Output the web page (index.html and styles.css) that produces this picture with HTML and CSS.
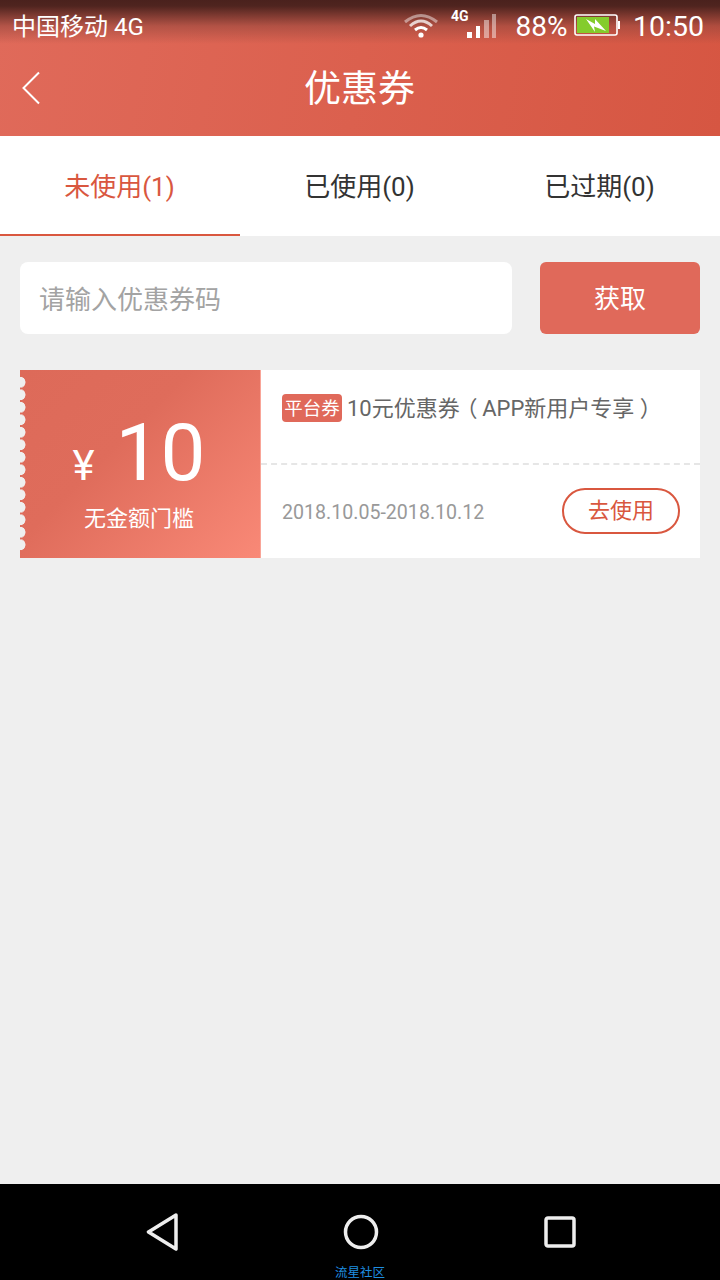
FILE: index.html

```html
<!DOCTYPE html>
<html>
<head>
    <meta charset="utf-8">
    <title>优惠券</title>
    <link rel="stylesheet" href="styles.css">
</head>
<body>
<div class="page">
    <div class="header">
        <div class="status">
            <span class="carrier">中国移动 4G</span>
            <svg class="wifi" width="36" height="26" viewBox="0 0 36 26">
                <path d="M2 10 Q18 -3 34 10" fill="none" stroke="#fff" stroke-opacity=".45" stroke-width="3"/>
                <path d="M7 14 Q18 4 29 14" fill="none" stroke="#fff" stroke-opacity=".75" stroke-width="3"/>
                <path d="M12 18 Q18 13 24 18" fill="none" stroke="#fff" stroke-width="3"/>
                <circle cx="18" cy="23" r="2.600" fill="#fff"/>
            </svg>
            <div class="signal">
                <span class="net">4G</span>
                <svg width="30" height="26" viewBox="0 0 30 26">
                    <rect x="0" y="20" width="5" height="6" fill="#fff"/>
                    <rect x="9" y="14" width="4" height="12" fill="#fff"/>
                    <rect x="17" y="8" width="5" height="18" fill="#fff" fill-opacity=".45"/>
                    <rect x="25" y="2" width="4" height="24" fill="#fff" fill-opacity=".45"/>
                </svg>
            </div>
            <span class="percent">88%</span>
            <svg class="battery" width="46" height="22" viewBox="0 0 46 22">
                <rect x="1" y="1" width="42" height="20" rx="2" fill="none" stroke="#fff" stroke-width="1.600"/>
                <rect x="3" y="3" width="32" height="16" fill="#84cc2c"/>
                <rect x="44" y="7" width="2" height="8" fill="#fff"/>
                <path d="M12 5 L21 10 L21 5 L32 17 L20 12.500 L21 18 Z" fill="#fff"/>
            </svg>
            <span class="time">10:50</span>
        </div>
        <div class="title-bar">
            <svg class="back" width="20" height="34" viewBox="0 0 20 34">
                <path d="M18 1.500 L2.500 17 L18 32.500" fill="none" stroke="#fff" stroke-width="2"/>
            </svg>
            <h1 class="title">优惠券</h1>
        </div>
    </div>

    <div class="tabs">
        <div class="tab active">未使用(1)</div>
        <div class="tab">已使用(0)</div>
        <div class="tab">已过期(0)</div>
    </div>

    <div class="main">
        <div class="code-row">
            <div class="code-input">请输入优惠券码</div>
            <div class="code-btn">获取</div>
        </div>

        <div class="coupon">
            <div class="coupon-left">
                <div class="amount"><span class="yen">¥</span><span class="num">10</span></div>
                <div class="limit">无金额门槛</div>
            </div>
            <div class="coupon-right">
                <div class="coupon-top">
                    <span class="tag">平台券</span>
                    <span class="coupon-name">10元优惠券<span class="paren">（</span> APP新用户专享 ）</span>
                </div>
                <div class="coupon-bottom">
                    <span class="date">2018.10.05-2018.10.12</span>
                    <span class="use-btn">去使用</span>
                </div>
            </div>
        </div>
    </div>

    <div class="navbar">
        <div class="nav-icons">
            <svg width="34" height="38" viewBox="0 0 34 38">
                <path d="M32 2 L4.500 19 L32 36 Z" fill="none" stroke="#eee" stroke-width="3.500" stroke-linejoin="round"/>
            </svg>
            <svg width="36" height="36" viewBox="0 0 36 36">
                <circle cx="18" cy="18" r="15.500" fill="none" stroke="#eee" stroke-width="3.500"/>
            </svg>
            <svg width="32" height="32" viewBox="0 0 32 32">
                <rect x="2" y="2" width="28" height="28" rx="2" fill="none" stroke="#eee" stroke-width="3.500"/>
            </svg>
        </div>
        <div class="watermark">流星社区</div>
    </div>
</div>
</body>
</html>
```

FILE: styles.css

```css
*{
    margin: 0px;
    padding: 0px;
    box-sizing: border-box;
}
body{
    background-color: #efefef;
    font-family: Roboto, "Noto Sans CJK SC", sans-serif;
}
.page{
    width: 720px;
    height: 1280px;
    display: flex;
    flex-direction: column;
    overflow: hidden;
}
/*顶部*/
.header{
    height: 136px;
    color: #fff;
    background: linear-gradient(180deg, #4a211d 0px, #4f241f 6px, rgba(150,70,60,0.6) 26px, rgba(224,104,88,0) 44px),
                linear-gradient(100deg, #e06a5a 0%, #d65642 100%);
}
.status{
    height: 50px;
    padding: 3px 16px 0px 12px;
    display: flex;
    align-items: center;
}
.carrier{
    font-size: 24px;
    margin-right: auto;
    margin-top: -4px;
}
.wifi{
    margin-right: 12px;
    margin-bottom: 4px;
}
.signal{
    display: flex;
    align-items: flex-end;
    margin-right: 19px;
    margin-bottom: 4px;
}
.net{
    font-size: 14px;
    font-weight: bold;
    align-self: flex-start;
    margin-right: -2px;
    margin-top: -4px;
}
.percent{
    font-size: 28px;
    margin-right: 6px;
}
.battery{
    margin-right: 13.500px;
    margin-bottom: 3px;
}
.time{
    font-size: 28.500px;
}
.title-bar{
    height: 76px;
    padding: 0px 1px 4px 0px;
    position: relative;
    display: flex;
    align-items: center;
    justify-content: center;
}
.back{
    position: absolute;
    left: 21px;
    top: 21px;
}
.title{
    font-size: 37px;
    font-weight: normal;
}
/*选项卡*/
.tabs{
    height: 100px;
    background: #fff;
    display: flex;
}
.tab{
    width: 240px;
    padding: 0px 1px 2px 0px;
    display: flex;
    align-items: center;
    justify-content: center;
    font-size: 26px;
    color: #333;
    border-bottom: 2px solid transparent;
}
.tab.active{
    color: #d9573f;
    border-bottom-color: #d9573f;
}
.main{
    flex: 1;
    padding: 26px 20px 0px;
}
.code-row{
    display: flex;
    justify-content: space-between;
}
.code-input{
    width: 492px;
    height: 72px;
    line-height: 76px;
    padding-left: 19px;
    background: #fff;
    border-radius: 8px;
    font-size: 26px;
    color: #a3a3a3;
}
.code-btn{
    width: 160px;
    height: 72px;
    line-height: 74px;
    text-align: center;
    background: #e0695a;
    border-radius: 6px;
    font-size: 26px;
    color: #fff;
}
/*优惠券*/
.coupon{
    margin-top: 36px;
    height: 188px;
    display: flex;
    background: #fff;
}
.coupon-left{
    width: 240px;
    padding-right: 2px;
    position: relative;
    color: #fff;
    display: flex;
    flex-direction: column;
    align-items: center;
    background: linear-gradient(135deg, #dd6a59 0%, #df6c5b 40%, #f98977 100%);
}
/*左边的锯齿*/
.coupon-left::before{
    content: "";
    position: absolute;
    left: 0px;
    top: 6.300px;
    width: 6px;
    height: 175px;
    background: radial-gradient(circle at 0px 50%, #efefef 5.200px, rgba(239,239,239,0) 5.800px) 0px 0px / 6px 12.500px repeat-y;
}
.amount{
    display: flex;
    align-items: baseline;
    height: 122px;
    padding-top: 44px;
}
.yen{
    font-size: 42px;
    margin-right: 21px;
}
.num{
    font-size: 80px;
    line-height: 78px;
}
.limit{
    font-size: 22px;
    margin-top: 8px;
}
.coupon-right{
    flex: 1;
    border-left: 1px solid #f9a598;
    display: flex;
    flex-direction: column;
}
.coupon-top{
    height: 95px;
    padding: 24px 0px 0px 21px;
    display: flex;
    align-items: flex-start;
    border-bottom: 2px dashed #e6e6e6;
}
.tag{
    width: 60px;
    height: 28px;
    line-height: 30px;
    text-align: center;
    font-size: 18.500px;
    color: #fff;
    background: #e0695a;
    border-radius: 4px;
}
.coupon-name{
    font-size: 22px;
    line-height: 29px;
    color: #666;
    margin-left: 5px;
}
.paren{
    font-feature-settings: "palt";
    margin-left: 6px;
}
.coupon-bottom{
    flex: 1;
    padding: 0px 20px 0px 21px;
    display: flex;
    align-items: center;
    justify-content: space-between;
}
.date{
    font-size: 19.600px;
    color: #999;
    margin-top: 2px;
}
.use-btn{
    width: 118px;
    height: 46px;
    line-height: 42px;
    margin-top: -1px;
    text-align: center;
    font-size: 22px;
    color: #d9573f;
    border: 2px solid #d9573f;
    border-radius: 23px;
}
/*底部导航*/
.navbar{
    height: 96px;
    background: #000;
    display: flex;
    flex-direction: column;
    align-items: center;
    overflow: hidden;
}
.nav-icons{
    width: 432px;
    height: 84px;
    padding-top: 16px;
    display: flex;
    align-items: center;
    justify-content: space-between;
}
.watermark{
    font-size: 12.500px;
    line-height: 14px;
    margin-top: 3px;
    color: #1f8fe0;
}
```
